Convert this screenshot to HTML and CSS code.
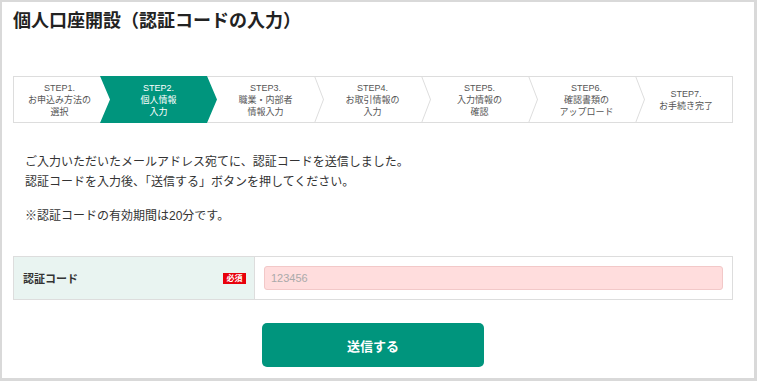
FILE: index.html
```html
<!DOCTYPE html>
<html lang="ja">
<head>
    <meta charset="utf-8">
    <title>個人口座開設（認証コードの入力）</title>
    <link rel="stylesheet" href="styles.css">
</head>
<body>
<div class="page">

    <h1 class="title">個人口座開設（認証コードの入力）</h1>

    <!-- ステップ表示 -->
    <ol class="steps">
        <li class="step before-current">STEP1.<br>お申込み方法の<br>選択</li>
        <li class="step current">STEP2.<br>個人情報<br>入力</li>
        <li class="step">STEP3.<br>職業・内部者<br>情報入力</li>
        <li class="step">STEP4.<br>お取引情報の<br>入力</li>
        <li class="step">STEP5.<br>入力情報の<br>確認</li>
        <li class="step">STEP6.<br>確認書類の<br>アップロード</li>
        <li class="step last">STEP7.<br>お手続き完了</li>
    </ol>

    <div class="message">
        <p>ご入力いただいたメールアドレス宛てに、認証コードを送信しました。<br>認証コードを入力後、「送信する」ボタンを押してください。</p>
        <p>※認証コードの有効期間は20分です。</p>
    </div>

    <!-- 認証コード入力 -->
    <form class="code-form">
        <div class="field">
            <label class="field-label" for="code">認証コード<span class="required">必須</span></label>
            <div class="field-input">
                <input type="text" id="code" placeholder="123456">
            </div>
        </div>
        <div class="actions">
            <button type="submit" class="submit">送信する</button>
        </div>
    </form>

</div>
</body>
</html>
```

FILE: styles.css
```css
html, body { margin: 0; padding: 0; }
body { font-family: "Liberation Sans", "Noto Sans CJK JP", sans-serif; color: #333; background: #fff; }

.page {
    box-sizing: border-box;
    height: 381px;
    border: solid #d9d9d9;
    border-width: 2px 3px 3px 2px;
    padding: 7px 21px 0 11px;
}

.title { margin: 0; font-size: 18px; line-height: 24px; font-weight: bold; color: #222; }

/* ステップ */
.steps {
    display: flex;
    list-style: none;
    margin: 43px 0 0;
    padding: 0;
    border: 1px solid #ddd;
    height: 45px;
}
.step {
    position: relative;
    flex: 0 0 107px;
    display: flex;
    align-items: center;
    justify-content: center;
    text-align: center;
    font-size: 9px;
    line-height: 12px;
    color: #555;
    z-index: 0;
}
.step:first-child { flex-basis: 91px; }
.step.last { flex: 1; }

/* 区切りの矢印 */
.step::after {
    content: "";
    position: absolute;
    top: -1px;
    bottom: -1px;
    right: -5px;
    width: 10px;
    background: #ddd;
    clip-path: polygon(0 0, 1px 0, 100% 50%, 1px 100%, 0 100%, calc(100% - 1px) 50%);
    z-index: 1;
}
.step.last::after, .step.before-current::after, .step.current::after { display: none; }

.step.current { color: #fff; }
.step.current::before {
    content: "";
    position: absolute;
    top: -1px;
    bottom: -1px;
    left: -5px;
    right: -5px;
    background: #00957d;
    clip-path: polygon(0 0, calc(100% - 10px) 0, 100% 50%, calc(100% - 10px) 100%, 0 100%, 10px 50%);
    z-index: -1;
}

/* メッセージ */
.message { margin-top: 29px; padding-left: 12px; font-size: 12px; line-height: 20px; }
.message p { margin: 0 0 14px; }
.message p:last-child { margin-bottom: 0; }

/* フォーム */
.code-form { margin-top: 30px; }
.field { display: flex; border: 1px solid #ddd; }
.field-label {
    box-sizing: border-box;
    width: 241px;
    display: flex;
    align-items: center;
    justify-content: space-between;
    padding: 0 8px 0 9px;
    background: #e9f4f1;
    border-right: 1px solid #ddd;
    font-size: 11px;
    font-weight: bold;
    color: #333;
}
.required {
    display: inline-block;
    width: 23px;
    height: 11px;
    line-height: 11px;
    text-align: center;
    background: #e8000b;
    color: #fff;
    font-size: 8px;
    font-weight: bold;
}
.field-input { flex: 1; padding: 9px; }
.field-input input {
    box-sizing: border-box;
    display: block;
    width: 100%;
    height: 24px;
    padding: 0 6px;
    border: 1px solid #f2c8c8;
    border-radius: 3px;
    background: #ffdddd;
    font-family: "Liberation Sans", "Noto Sans CJK JP", sans-serif;
    font-size: 11px;
    color: #333;
}
.field-input input::placeholder { color: #aaa; }

.actions { display: flex; justify-content: center; margin-top: 23px; }
.submit {
    width: 222px;
    height: 44px;
    border: none;
    border-radius: 5px;
    background: #00957d;
    color: #fff;
    font-family: "Liberation Sans", "Noto Sans CJK JP", sans-serif;
    font-size: 13px;
    font-weight: bold;
}
```
